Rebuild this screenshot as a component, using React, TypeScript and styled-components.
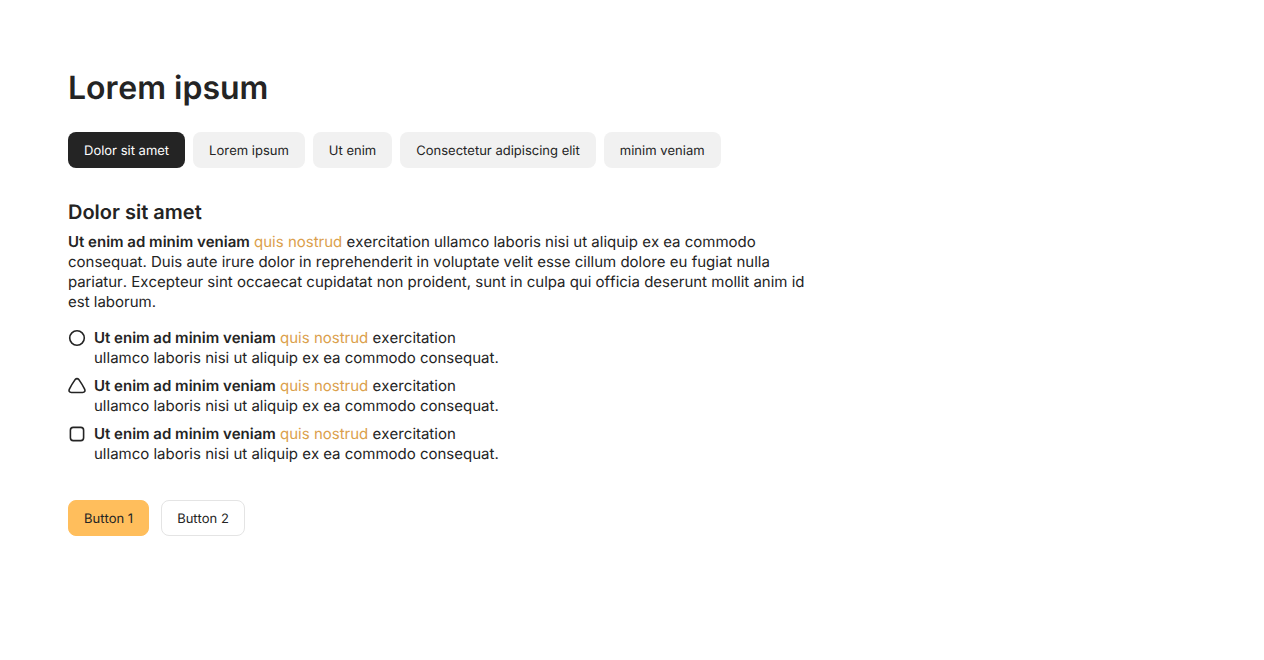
import React, { useState } from 'react';
import styled, { createGlobalStyle } from 'styled-components';

const GlobalStyle = createGlobalStyle`
  *, *::before, *::after { box-sizing: border-box; }
  body {
    margin: 0;
    background: #ffffff;
    color: #242424;
    font-family: Inter, "Liberation Sans", sans-serif;
    font-size: 15px;
    line-height: 20px;
    font-kerning: none;
    text-rendering: geometricPrecision;
  }
`;

const Page = styled.main`
  padding: 68px;
`;

const Title = styled.h1`
  margin: 0 0 24px;
  font-size: 32px;
  line-height: 40px;
  font-weight: 600;
`;

const TabBar = styled.nav`
  display: flex;
  flex-wrap: wrap;
  gap: 8px;
  margin-bottom: 32px;
`;

const Tab = styled.button<{ $active: boolean }>`
  height: 36px;
  padding: 1px 16px 0;
  border: 0;
  border-radius: 8px;
  background: ${({ $active }) => ($active ? '#242424' : '#f1f1f1')};
  color: ${({ $active }) => ($active ? '#ffffff' : '#242424')};
  font-family: inherit;
  font-size: 13px;
  line-height: 20px;
  font-kerning: inherit;
  text-rendering: inherit;
  cursor: pointer;
`;

const Section = styled.section`
  max-width: 744px;
`;

const Subtitle = styled.h2`
  margin: 0 0 8px;
  font-size: 20px;
  line-height: 24px;
  font-weight: 600;
`;

const Paragraph = styled.p`
  margin: 0 0 16px;
`;

const Strong = styled.strong`
  font-weight: 600;
`;

const Link = styled.a`
  color: #dba04c;
  text-decoration: none;
`;

const List = styled.ul`
  display: flex;
  flex-direction: column;
  gap: 8px;
  max-width: 440px;
  margin: 0 0 36px;
  padding: 0;
  list-style: none;
`;

const Item = styled.li`
  display: flex;
  gap: 8px;
`;

const Shape = styled.svg`
  flex: none;
  width: 18px;
  height: 18px;
  margin-top: 1px;
  fill: none;
  stroke: currentColor;
  stroke-width: 1.6;
  stroke-linejoin: round;
`;

const Actions = styled.div`
  display: flex;
  gap: 12px;
`;

const Button = styled.button<{ $primary?: boolean }>`
  height: 36px;
  padding: 1px 15px 0;
  border: 1px solid ${({ $primary }) => ($primary ? '#ffbe5c' : '#e4e4e4')};
  border-radius: 8px;
  background: ${({ $primary }) => ($primary ? '#ffbe5c' : '#ffffff')};
  color: #242424;
  font-family: inherit;
  font-size: 13px;
  line-height: 20px;
  font-kerning: inherit;
  text-rendering: inherit;
  cursor: pointer;
`;

const tabs = ['Dolor sit amet', 'Lorem ipsum', 'Ut enim', 'Consectetur adipiscing elit', 'minim veniam'];

const shapes = [
  { name: 'circle', drawing: <circle cx="9" cy="9" r="7.3" /> },
  {
    name: 'triangle',
    drawing: (
      <path d="M7.1 2.6 Q9 0.6 10.9 2.6 Q14.2 7.3 16.5 11.9 C17.5 14 16.8 15.5 14.6 15.5 L3.4 15.5 C1.2 15.5 0.5 14 1.5 11.9 Q3.8 7.3 7.1 2.6 Z" />
    ),
  },
  { name: 'square', drawing: <rect x="2.4" y="2.4" width="13.2" height="13.2" rx="2.8" /> },
];

export default function App() {
  const [active, setActive] = useState(0);
  return (
    <Page>
      <GlobalStyle />
      <Title>Lorem ipsum</Title>
      <TabBar>
        {tabs.map((label, index) => (
          <Tab key={label} type="button" $active={index === active} onClick={() => setActive(index)}>
            {label}
          </Tab>
        ))}
      </TabBar>
      <Section>
        <Subtitle>Dolor sit amet</Subtitle>
        <Paragraph>
          <Strong>Ut enim ad minim veniam</Strong> <Link href="#">quis nostrud</Link> exercitation ullamco laboris nisi
          ut aliquip ex ea commodo consequat. Duis aute irure dolor in reprehenderit in voluptate velit esse cillum
          dolore eu fugiat nulla pariatur. Excepteur sint occaecat cupidatat non proident, sunt in culpa qui officia
          deserunt mollit anim id est laborum.
        </Paragraph>
        <List>
          {shapes.map(({ name, drawing }) => (
            <Item key={name}>
              <Shape viewBox="0 0 18 18" aria-hidden="true">
                {drawing}
              </Shape>
              <span>
                <Strong>Ut enim ad minim veniam</Strong> <Link href="#">quis nostrud</Link> exercitation
                <br />
                ullamco laboris nisi ut aliquip ex ea commodo consequat.
              </span>
            </Item>
          ))}
        </List>
        <Actions>
          <Button type="button" $primary>
            Button 1
          </Button>
          <Button type="button">Button 2</Button>
        </Actions>
      </Section>
    </Page>
  );
}
